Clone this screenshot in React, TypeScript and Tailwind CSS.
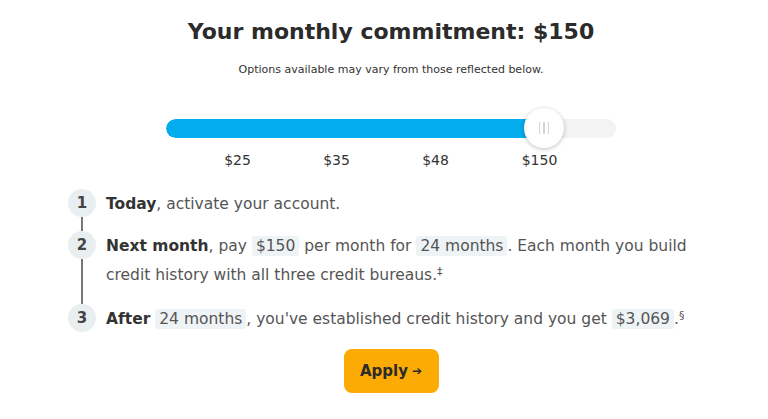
import React from 'react';

const steps = [25, 35, 48, 150];

const Chip = ({ children }: { children: React.ReactNode }) => (
  <span className="bg-[#eef3f5] rounded-[3px] px-[4px] py-[1px] text-[#555]">{children}</span>
);

const StepNum = ({ n, line }: { n: number; line: boolean }) => (
  <div className="flex flex-col items-center w-[28px] shrink-0">
    <div className="w-[28px] h-[28px] rounded-full bg-[#e9eff1] flex items-center justify-center text-[15px] font-bold text-[#444]">
      {n}
    </div>
    {line && <div className="flex-1 w-[2px] bg-[#777]" />}
  </div>
);

export default function App() {
  return (
    <div className="w-[768px] h-[419px] bg-white font-['DejaVu_Sans',sans-serif] text-[#333]">
      <div className="w-[646px] ml-[68px] flex flex-col items-center pt-[16px]">
        <h1 className="text-[22px] font-bold text-[#2b2b2b] leading-[32px]">Your monthly commitment: $150</h1>
        <p className="text-[11px] text-[#333] mt-[15px] leading-[14px]">Options available may vary from those reflected below.</p>

        {/* slider */}
        <div className="mt-[42px] w-[450px] relative">
          <div className="h-[19px] rounded-full bg-[#f3f3f3] overflow-hidden">
            <div className="h-full w-[378px] bg-[#03acec] rounded-full" />
          </div>
          <div className="absolute left-[358px] top-[-11px] w-[40px] h-[40px] rounded-full bg-white shadow-[0_1px_4px_rgba(0,0,0,0.25)] flex items-center justify-center gap-[3px]">
            <span className="w-[1.5px] h-[12px] bg-[#d4d4d4]" />
            <span className="w-[1.5px] h-[12px] bg-[#d4d4d4]" />
            <span className="w-[1.5px] h-[12px] bg-[#d4d4d4]" />
          </div>
          <div className="flex ml-[22px] mt-[12px]">
            {steps.map((s, i) => (
              <div key={s} className={`w-[99px] text-center text-[14px] text-[#333] leading-[20px] ${i === 3 ? 'ml-[5px]' : ''}`}>
                ${s}
              </div>
            ))}
          </div>
        </div>

        {/* steps */}
        <ol className="self-stretch mt-[19px] text-[15.5px] leading-[29px] text-[#555]">
          <li className="flex gap-[10px]">
            <StepNum n={1} line />
            <div className="pb-[12px] pt-[1px]">
              <b className="text-[#333]">Today</b>, activate your account.
            </div>
          </li>
          <li className="flex gap-[10px]">
            <StepNum n={2} line />
            <div className="pb-[14px] pt-[1px] pr-[10px]">
              <b className="text-[#333]">Next month</b>, pay <Chip>$150</Chip> per month for <Chip>24 months</Chip>. Each month you build credit history with all three credit bureaus.<sup className="text-[11px]">‡</sup>
            </div>
          </li>
          <li className="flex gap-[10px]">
            <StepNum n={3} line={false} />
            <div className="pt-[1px]">
              <b className="text-[#333]">After</b> <Chip>24 months</Chip>, you've established credit history and you get <Chip>$3,069</Chip>.<sup className="text-[11px]">§</sup>
            </div>
          </li>
        </ol>

        <button className="mt-[15px] w-[95px] h-[44px] rounded-[8px] bg-[#fcaa04] text-[15px] font-bold text-[#2b2b2b] flex items-center justify-center gap-[4px]">
          Apply <span className="text-[12px]">➔</span>
        </button>
      </div>
    </div>
  );
}
